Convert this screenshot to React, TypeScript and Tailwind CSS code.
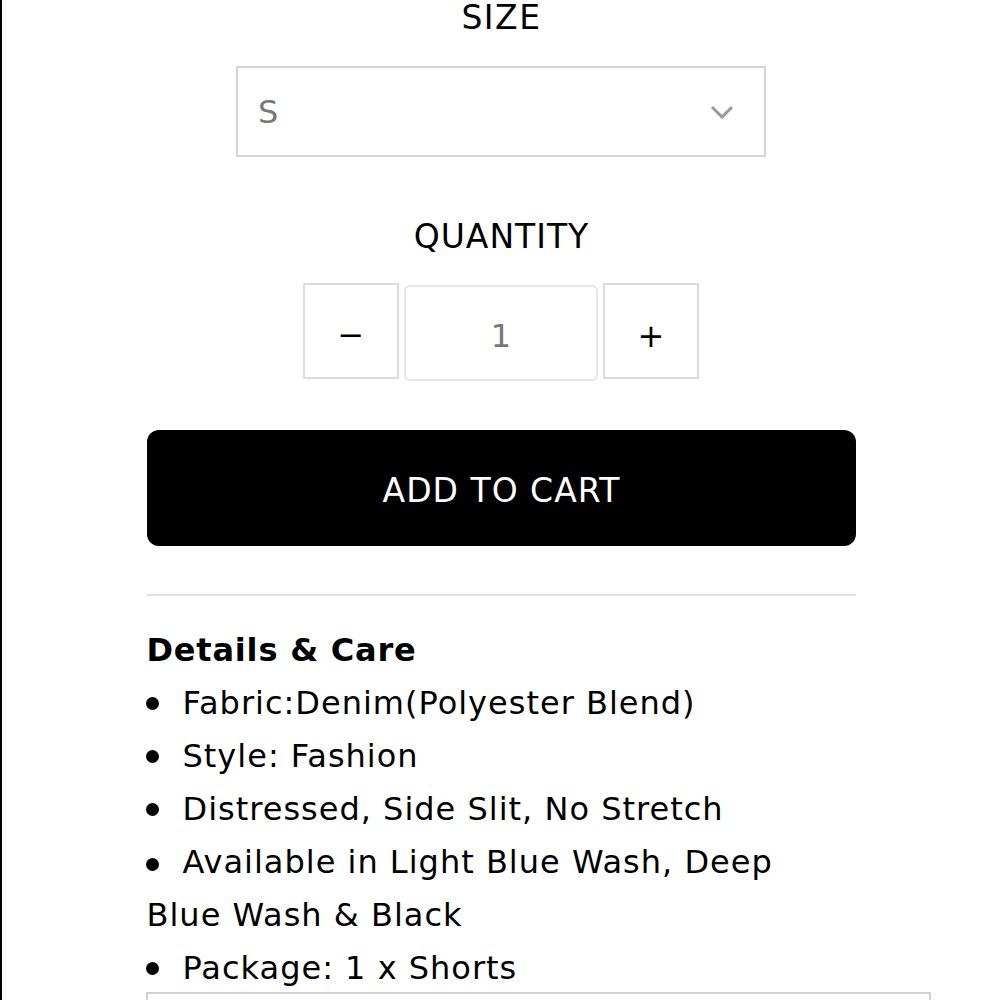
const items = [
  "Fabric:Denim(Polyester Blend)",
  "Style: Fashion",
  "Distressed, Side Slit, No Stretch",
];

const Dot = () => (
  <span className="flex w-[36px] shrink-0 items-center">
    <span className="ml-[-1px] h-[13px] w-[13px] rounded-full bg-black" />
  </span>
);

export default function App() {
  return (
    <div
      className="h-[1000px] w-[1000px] overflow-hidden border-l-2 border-black bg-white text-black"
      style={{ fontFamily: '"DejaVu Sans", Verdana, sans-serif' }}
    >
      <div className="mx-auto flex w-[709px] flex-col items-center">
        <div className="pl-[1px] text-[33px] leading-[36px] tracking-[1.5px]">SIZE</div>
        <div className="mt-[30px] flex h-[91px] w-[530px] items-center justify-between border-2 border-[#d4d4d4] pl-[20px] pr-[30px]">
          <span className="text-[32px] text-[#777]">S</span>
          <svg width="24" height="14" viewBox="0 0 24 14" fill="none">
            <path d="M2 2l10 10L22 2" stroke="#9a9a9a" strokeWidth="3" />
          </svg>
        </div>
        <div className="mt-[61px] pl-[1px] text-[33px] leading-[38px] tracking-[1px]">QUANTITY</div>
        <div className="mt-[27px] flex items-start gap-[5px]">
          <div className="flex h-[96px] w-[96px] items-center justify-center border-2 border-[#dcdcdc] pt-[8px] text-[32px]">
            −
          </div>
          <div className="mt-[2px] flex h-[96px] w-[194px] items-center justify-center rounded-[6px] border-2 border-[#e6e6e6] pt-[6px] text-[32px] text-[#777]">
            1
          </div>
          <div className="flex h-[96px] w-[96px] items-center justify-center border-2 border-[#dcdcdc] pt-[10px] text-[32px]">
            +
          </div>
        </div>
        <button className="mt-[49px] flex h-[116px] w-full items-center justify-center rounded-[12px] bg-black pl-[1px] pt-[5px] text-[33px] tracking-[1px] text-white">
          ADD TO CART
        </button>
        <div className="mt-[48px] h-[2px] w-full bg-[#e0e0e0]" />
        <div className="mt-[28px] w-full text-[32px] leading-[53px] tracking-[1px]">
          <div className="font-bold tracking-[0.8px]">Details &amp; Care</div>
          {items.map((t) => (
            <div key={t} className="flex">
              <Dot />
              <span>{t}</span>
            </div>
          ))}
          <div>
            <span className="inline-flex w-[36px] align-middle">
              <span className="ml-[-1px] h-[13px] w-[13px] rounded-full bg-black" />
            </span>
            Available in Light Blue Wash, Deep Blue Wash &amp; Black
          </div>
          <div className="flex">
            <Dot />
            <span>Package: 1 x Shorts</span>
          </div>
        </div>
      </div>
      <div className="ml-[144px] mt-[-3px] h-[40px] w-[785px] border-2 border-[#d0d0d0]" />
    </div>
  );
}
